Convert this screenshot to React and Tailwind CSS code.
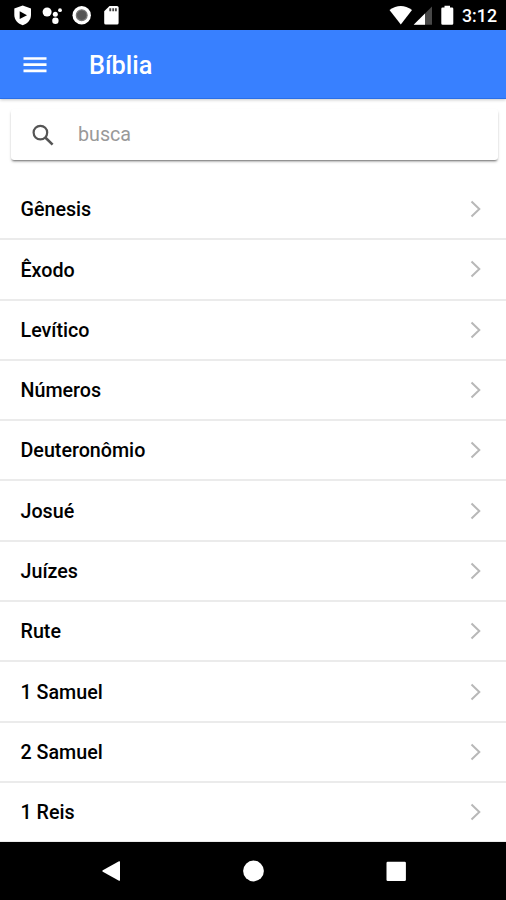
import React from 'react';

const books = [
  'Gênesis',
  'Êxodo',
  'Levítico',
  'Números',
  'Deuteronômio',
  'Josué',
  'Juízes',
  'Rute',
  '1 Samuel',
  '2 Samuel',
  '1 Reis',
];

const StatusBar = () => (
  <div className="flex h-[30px] shrink-0 items-center justify-between bg-black text-white">
    <svg width="125" height="30" viewBox="0 0 125 30" fill="currentColor">
      {/* Shield */}
      <path d="M22.7 5.5 L31 8.5 V15 C31 20 27.3 23.7 22.7 25.2 C18 23.7 14.3 20 14.3 15 V8.5 Z" />
      <path d="M19.7 11.3 L27 15.2 L19.7 19 Z" fill="#000" />
      {/* Assistant */}
      <circle cx="47.1" cy="12" r="4.5" />
      <circle cx="55.3" cy="14.3" r="2.5" />
      <circle cx="60" cy="10.2" r="1.9" />
      <circle cx="55.4" cy="20.8" r="3.2" />
      {/* Record */}
      <circle cx="81.7" cy="15.2" r="9.2" />
      <circle cx="81.7" cy="15.2" r="5.4" fill="#555" stroke="#777" strokeWidth="1.2" />
      {/* SD card */}
      <path d="M109.5 6 H117 Q118.6 6 118.6 7.6 V23 Q118.6 24.6 117 24.6 H105.8 Q104.2 24.6 104.2 23 V11.3 Z" />
      <path d="M109.3 8.2 h1.9 v3 h-1.9 z M112.3 8.2 h1.7 v3 h-1.7 z M114.9 8.2 h1.9 v3 h-1.9 z" fill="#444" />
    </svg>
    <div className="flex items-center pr-[9px]">
      <svg width="71" height="30" viewBox="0 0 71 30" fill="currentColor">
        {/* Wifi */}
        <path d="M5.5 10 Q16.8 1.8 28 10 L16.8 24.6 Z" />
        {/* Signal */}
        <path d="M48 6.5 V24.8 H29.7 Z" fill="#484848" />
        <path d="M41 13.5 V24.8 H29.7 Z" />
        {/* Battery */}
        <path d="M60.5 5.8 h5.5 v1.7 h2 q1.3 0 1.3 1.3 v14.6 q0 1.3 -1.3 1.3 h-9.4 q-1.3 0 -1.3 -1.3 v-14.6 q0 -1.3 1.3 -1.3 h1.9 z" />
      </svg>
      <span className="ml-[7px] mt-[2px] text-[17.8px] leading-none font-medium">3:12</span>
    </div>
  </div>
);

const Header = () => (
  <header className="relative z-10 flex h-[69px] shrink-0 items-center border-b border-[#2a6fe8] bg-[#3880ff] pl-[23px] text-white shadow-[0_1px_3px_rgba(0,0,0,0.22)]">
    <button aria-label="Menu">
      <svg width="24" height="18" viewBox="0 0 24 18" stroke="currentColor" strokeWidth="2.7">
        <path d="M0.5 3.5 H23.5 M0.5 9.7 H23.5 M0.5 15.9 H23.5" />
      </svg>
    </button>
    <h1 className="ml-[42px] mt-[3px] text-[25.3px] leading-none font-medium">Bíblia</h1>
  </header>
);

const SearchBar = () => (
  <div className="h-[81px] shrink-0 pt-[10px] pr-2 pl-[11px]">
    <div className="flex h-[51px] items-center rounded-[3px] bg-white pl-[21px] shadow-[0_2px_2px_-1px_rgba(0,0,0,0.45),0_2px_3px_rgba(0,0,0,0.16)]">
      <svg width="22" height="22" viewBox="0 0 22 22" fill="none" stroke="#555" strokeWidth="2.2">
        <circle cx="8.4" cy="8.6" r="6.8" />
        <path d="M13.3 13.5 L20.6 20.6" strokeWidth="2.6" />
      </svg>
      <input
        type="text"
        placeholder="busca"
        className="ml-6 min-w-0 flex-1 bg-transparent text-[19.7px] text-[#333] outline-none placeholder:text-[#999]"
      />
    </div>
  </div>
);

const BookItem = ({ name }) => (
  <li className="flex h-[60.3px] items-center justify-between border-b-2 border-[#ebebeb] pr-[25px] pl-[20.5px]">
    <span className="mt-[2px] text-[19.7px] leading-none font-medium text-black">{name}</span>
    <svg width="11" height="18" viewBox="0 0 11 18" fill="none" stroke="#b8b8b8" strokeWidth="2">
      <path d="M1.5 1.5 L9.3 9 L1.5 16.5" />
    </svg>
  </li>
);

const NavBar = () => (
  <div className="flex h-[58px] shrink-0 items-center bg-black">
    <svg width="506" height="58" viewBox="0 0 506 58" fill="#fff">
      <path d="M119 19.3 Q120 18.8 120 20 V38 Q120 39.2 119 38.7 L102.8 29.8 Q101.6 29 102.8 28.2 Z" />
      <circle cx="253.5" cy="29" r="10.4" />
      <rect x="386.5" y="19.7" width="19.4" height="19.2" rx="1.2" />
    </svg>
  </div>
);

const App = () => {
  return (
    <div className="flex h-[900px] w-full flex-col overflow-hidden bg-white font-['Roboto',sans-serif]">
      <StatusBar />
      <Header />
      <SearchBar />
      <ul className="min-h-0 flex-1 overflow-hidden">
        {books.map((name) => (
          <BookItem key={name} name={name} />
        ))}
      </ul>
      <NavBar />
    </div>
  );
};

export default App;
